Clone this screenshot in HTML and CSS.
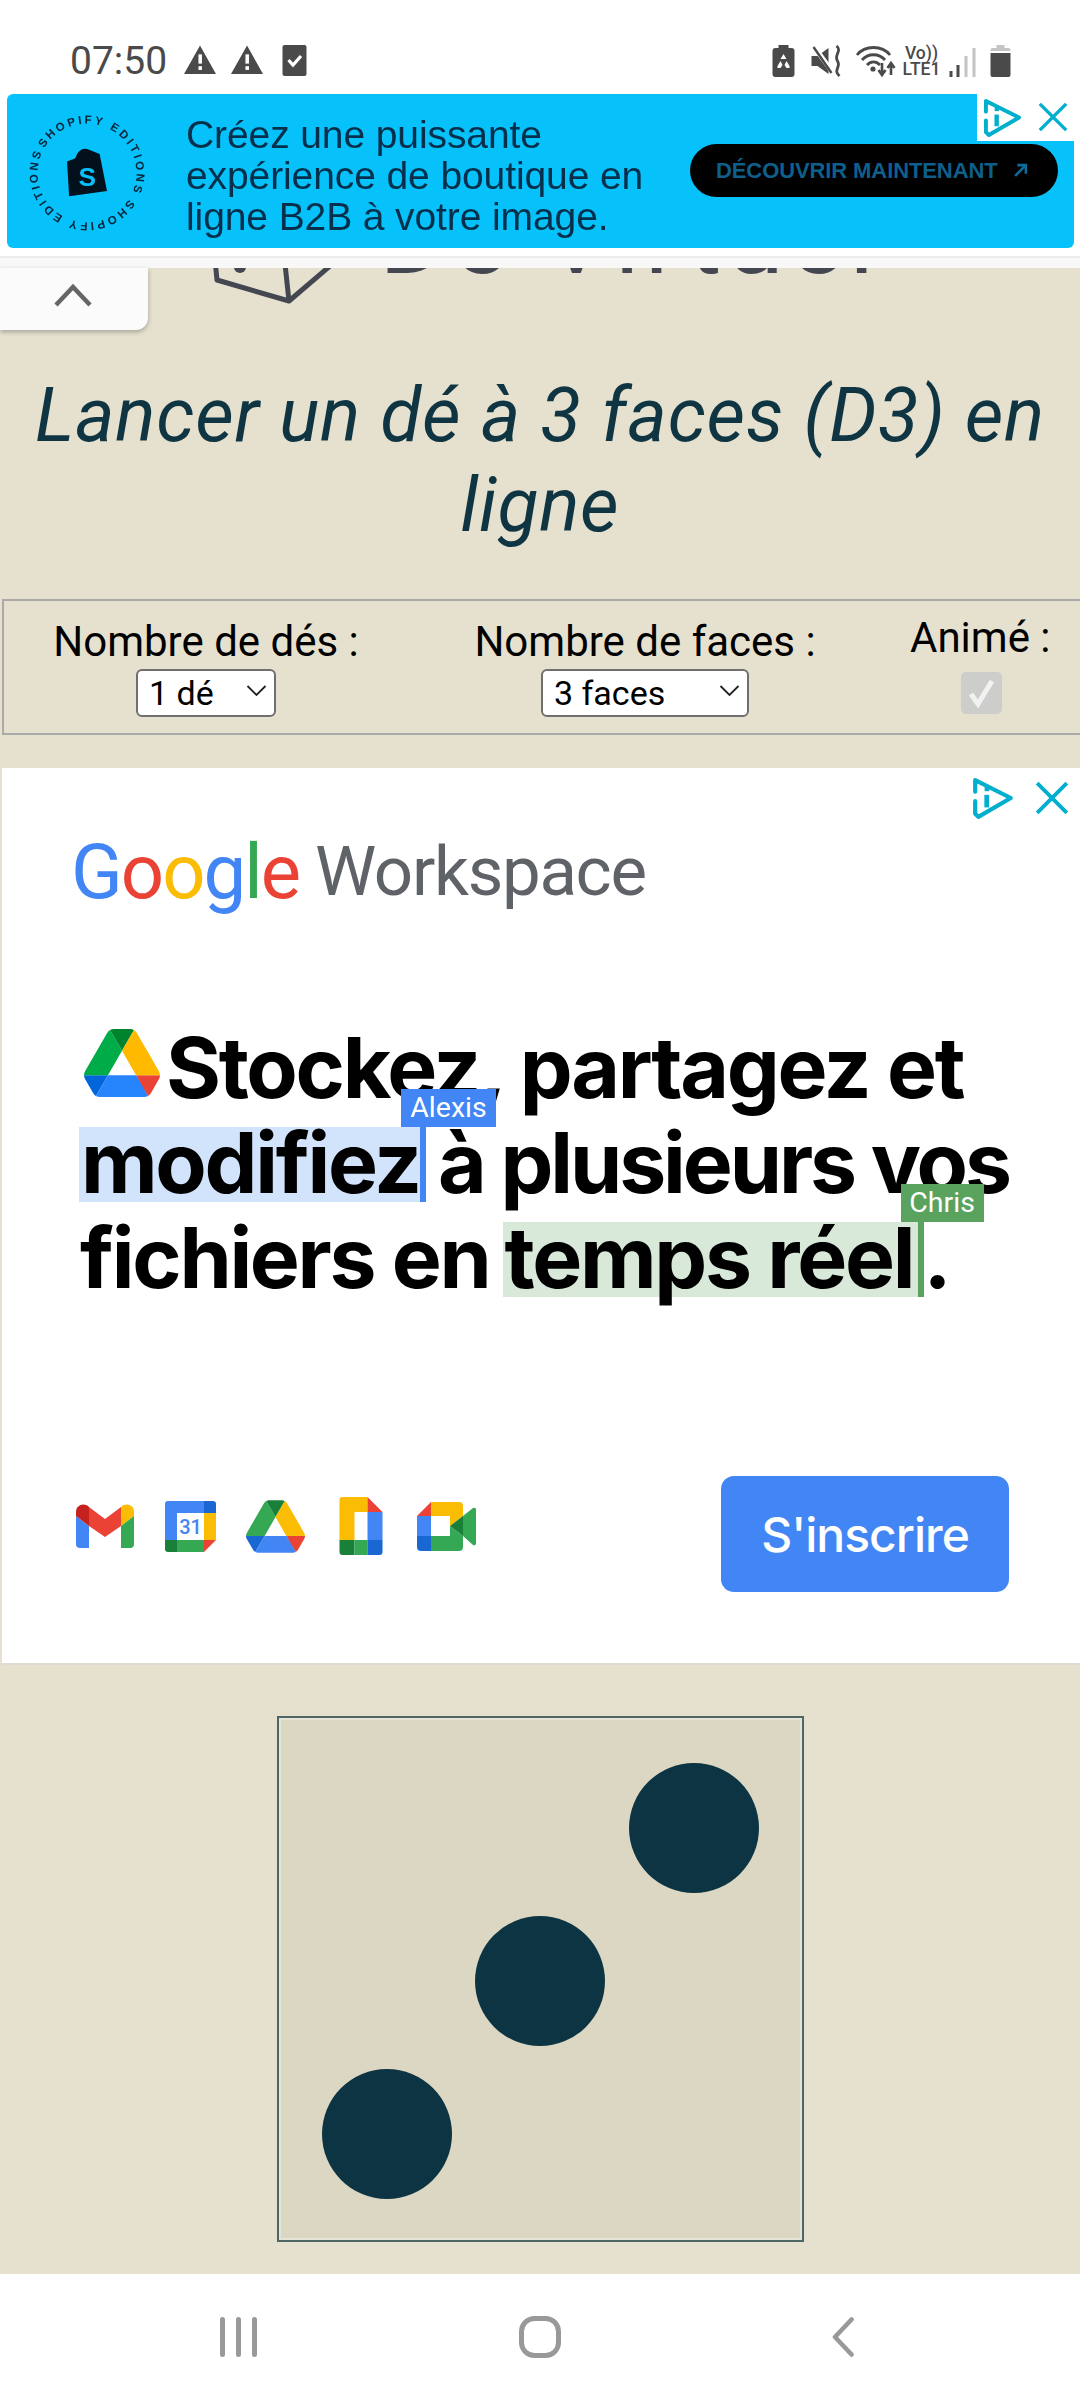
FILE: index.html
```html
<!DOCTYPE html>
<html lang="fr">
<head>
<meta charset="utf-8">
<title>Lancer un dé à 3 faces</title>
<link rel="stylesheet" href="styles.css">
</head>
<body>
<svg class="defs" width="0" height="0" aria-hidden="true">
  <symbol id="warn" viewBox="0 0 31 28"><path d="M15.5 0.5 L31 28 H0 Z" fill="#4a4a4a"/><rect x="14" y="9" width="3.4" height="9" fill="#fff"/><rect x="14" y="20.5" width="3.4" height="3.6" fill="#fff"/></symbol>
  <symbol id="adinfo" viewBox="0 0 40 42"><path d="M3 15 V4 L37 21 L6 39 L3 36 V24" fill="none" stroke="currentColor" stroke-width="4" stroke-linejoin="round" stroke-linecap="round"/><path d="M14 18 V30" stroke="currentColor" stroke-width="4.5"/><rect x="12" y="10" width="4.5" height="4.5" fill="currentColor"/></symbol>
  <symbol id="adclose" viewBox="0 0 34 34"><path d="M3 3 L31 31 M31 3 L3 31" stroke="currentColor" stroke-width="3.6" fill="none"/></symbol>
</svg>

<header class="status">
  <div class="status-left">
    <span class="clock">07:50</span>
    <svg class="ic-warn"><use href="#warn"/></svg>
    <svg class="ic-warn"><use href="#warn"/></svg>
    <svg class="ic-check" viewBox="0 0 24 31"><rect width="24" height="31" rx="2" fill="#4a4a4a"/><path d="M6 15 L10.5 20 L18.5 11" fill="none" stroke="#fff" stroke-width="3.2"/></svg>
  </div>
  <div class="status-right">
    <svg class="ic-saver" viewBox="0 0 22 32"><path d="M6 0 H16 V3 H19 a3 3 0 0 1 3 3 V29 a3 3 0 0 1 -3 3 H3 a3 3 0 0 1 -3 -3 V6 a3 3 0 0 1 3 -3 H6 Z" fill="#4a4a4a"/><path d="M11 9 L14 14 H8 Z M5 21 L8 16 L10 20 L8 23 H5 Z M17 21 L14 16 L12 20 L14 23 H17 Z" fill="#fff"/></svg>
    <svg class="ic-mute" viewBox="0 0 31 32"><path d="M0 11 H6 L17 3 V29 L6 21 H0 Z" fill="#4a4a4a"/><path d="M2 1 L21 27" stroke="#fff" stroke-width="5"/><path d="M2 2 L20 28" stroke="#4a4a4a" stroke-width="2.4"/><path d="M25 1 C31 6 22 10 26 16 C30 22 21 25 28 31" fill="none" stroke="#4a4a4a" stroke-width="2.8"/></svg>
    <svg class="ic-wifi" viewBox="0 0 40 32"><path d="M1 10 C9 0 26 0 34 10 M6 15 C12 8 23 8 29 15 M11 20 C15 16 20 16 24 20" fill="none" stroke="#4a4a4a" stroke-width="2.8"/><circle cx="17" cy="24" r="2.6" fill="#4a4a4a"/><path d="M26 18 V28 M22.5 25 L26 30 L29.5 25 M35 30 V20 M31.5 23 L35 18 L38.5 23" fill="none" stroke="#4a4a4a" stroke-width="2.6"/></svg>
    <div class="net"><span>Vo))</span><span>LTE1</span></div>
    <svg class="ic-signal" viewBox="0 0 26 30"><rect x="0" y="24" width="3" height="6" fill="#4a4a4a"/><rect x="7" y="18" width="3" height="12" fill="#4a4a4a"/><rect x="15" y="9" width="3" height="21" fill="#c4c4c4"/><rect x="23" y="1" width="3" height="29" fill="#c4c4c4"/></svg>
    <svg class="ic-battery" viewBox="0 0 20 32"><path d="M6 0 H14 V3 H18 a2 2 0 0 1 2 2 V6 H0 V5 a2 2 0 0 1 2 -2 H6 Z" fill="#c4c4c4"/><path d="M0 8 H20 V30 a2 2 0 0 1 -2 2 H2 a2 2 0 0 1 -2 -2 Z" fill="#4a4a4a"/></svg>
  </div>
</header>

<section class="top-ad">
  <div class="banner">
    <div class="banner-content">
      <svg class="seal" viewBox="0 0 116 116">
        <defs><path id="ring" d="M58 58 m-47 0 a47 47 0 1 1 94 0 a47 47 0 1 1 -94 0"/></defs>
        <text class="seal-text" transform="rotate(30 58 58)"><textPath href="#ring" textLength="290">SHOPIFY EDITIONS SHOPIFY EDITIONS</textPath></text>
        <path d="M39 47 L47 44 C49 36 55 33 60 36 L70 40 L77 75 L41 80 Z" fill="#02111c"/>
        <text class="seal-s" x="50" y="70">S</text>
      </svg>
      <p class="banner-copy">Créez une puissante<br>expérience de boutique en<br>ligne B2B à votre image.</p>
      <div class="banner-cta"><span>DÉCOUVRIR MAINTENANT</span><svg class="cta-arrow" viewBox="0 0 14 14"><path d="M2 12 L11 3 M4 2 H12 V10" fill="none" stroke="#0f6b9c" stroke-width="2.4"/></svg></div>
    </div>
  </div>
  <div class="ad-tools top-tools">
    <svg class="tool-info"><use href="#adinfo"/></svg>
    <svg class="tool-close"><use href="#adclose"/></svg>
  </div>
  <div class="banner-rule"></div>
</section>

<main class="page">
  <div class="site-logo">
    <svg class="logo-cube" viewBox="0 0 130 40"><path d="M5 -8 L7 12 L79 33 L120 -2 M75 -4 L79 33" fill="none" stroke="#44474f" stroke-width="5" stroke-linejoin="round"/><circle cx="30" cy="-1" r="6" fill="#44474f"/></svg>
    <span class="logo-text">Dé Virtuel</span>
  </div>
  <button class="collapse" type="button" aria-label="Replier"><svg viewBox="0 0 38 24"><path d="M2 22 L19 4 L36 22" fill="none" stroke="#666" stroke-width="4.5"/></svg></button>

  <h1 class="title">Lancer un dé à 3 faces (D3) en ligne</h1>

  <form class="controls">
    <div class="control control-dice">
      <label for="dice">Nombre de dés :</label>
      <div class="select-wrap wrap-dice">
        <select id="dice"><option>1 dé</option></select>
        <svg class="chevron" viewBox="0 0 20 12"><path d="M1 1 L10 10 L19 1" fill="none" stroke="#222" stroke-width="1.8"/></svg>
      </div>
    </div>
    <div class="control control-faces">
      <label for="faces">Nombre de faces :</label>
      <div class="select-wrap wrap-faces">
        <select id="faces"><option>3 faces</option></select>
        <svg class="chevron" viewBox="0 0 20 12"><path d="M1 1 L10 10 L19 1" fill="none" stroke="#222" stroke-width="1.8"/></svg>
      </div>
    </div>
    <div class="control control-anim">
      <label for="anim">Animé :</label>
      <div class="fake-check"><svg viewBox="0 0 41 42"><path d="M10 22 L17 32 L31 9" fill="none" stroke="#f2f2f2" stroke-width="5"/></svg></div>
    </div>
  </form>

  <section class="gw-ad">
    <div class="ad-tools gw-tools">
      <svg class="tool-info"><use href="#adinfo"/></svg>
      <svg class="tool-close"><use href="#adclose"/></svg>
    </div>
    <div class="gw-logo"><span class="c-b">G</span><span class="c-r">o</span><span class="c-y">o</span><span class="c-b">g</span><span class="c-g">l</span><span class="c-r">e</span><span class="gw-name">Workspace</span></div>
    <div class="headline">
      <div class="hl-line">
        <svg class="drive-big" viewBox="0 0 87.3 78">
          <path d="m6.6 66.85 3.85 6.65c.8 1.4 1.95 2.5 3.3 3.3l13.75-23.8h-27.5c0 1.55.4 3.1 1.2 4.5z" fill="#0066da"/>
          <path d="m43.65 25-13.75-23.8c-1.35.8-2.5 1.9-3.3 3.3l-25.4 44a9.06 9.06 0 0 0 -1.2 4.5h27.5z" fill="#00ac47"/>
          <path d="m73.55 76.8c1.35-.8 2.5-1.9 3.3-3.3l1.6-2.75 7.65-13.25c.8-1.4 1.2-2.95 1.2-4.5h-27.502l5.852 11.5z" fill="#ea4335"/>
          <path d="m43.65 25 13.75-23.8c-1.35-.8-2.9-1.2-4.5-1.2h-18.5c-1.6 0-3.15.45-4.5 1.2z" fill="#00832d"/>
          <path d="m59.8 53h-32.3l-13.75 23.8c1.35.8 2.9 1.2 4.5 1.2h50.8c1.6 0 3.15-.45 4.5-1.2z" fill="#2684fc"/>
          <path d="m73.4 26.5-12.7-22c-.8-1.4-1.95-2.5-3.3-3.3l-13.75 23.8 16.15 28h27.45c0-1.55-.4-3.1-1.2-4.5z" fill="#ffba00"/>
        </svg>
        <span>Stockez, partagez et</span>
      </div>
      <div class="hl-line hl-second">
        <span class="mark mark-blue">modifiez<span class="tag tag-blue">Alexis</span></span>
        <span class="after-blue">à plusieurs vos</span>
      </div>
      <div class="hl-line">
        <span>fichiers en</span>
        <span class="mark mark-green">temps réel<span class="tag tag-green">Chris</span></span><span class="after-green">.</span>
      </div>
    </div>
    <div class="gw-foot">
      <div class="apps">
        <svg class="app-gmail" viewBox="0 0 58 45">
          <path d="M0 12 L13 22 V44 H4 a4 4 0 0 1 -4 -4Z" fill="#4285f4"/>
          <path d="M0 12 V8 C0 1 8 -2 13 3 V22 Z" fill="#c5221f"/>
          <path d="M13 3 L29 15 L45 3 V22 L29 33 L13 22Z" fill="#ea4335"/>
          <path d="M45 3 C50 -2 58 1 58 8 V12 L45 22 Z" fill="#fbbc04"/>
          <path d="M45 22 L58 12 V40 a4 4 0 0 1 -4 4 H45Z" fill="#34a853"/>
        </svg>
        <svg class="app-cal" viewBox="0 0 51 51">
          <path d="M3 0 H39 V12 H12 V39 H0 V3 a3 3 0 0 1 3 -3Z" fill="#4285f4"/>
          <path d="M39 0 H48 a3 3 0 0 1 3 3 V12 H39Z" fill="#1967d2"/>
          <rect x="39" y="12" width="12" height="27" fill="#fbbc04"/>
          <path d="M39 39 H51 L39 51Z" fill="#ea4335"/>
          <rect x="12" y="39" width="27" height="12" fill="#34a853"/>
          <path d="M0 39 H12 V51 H3 a3 3 0 0 1 -3 -3Z" fill="#188038"/>
          <text class="cal-num" x="25.5" y="33">31</text>
        </svg>
        <svg class="app-drive" viewBox="0 0 87.3 78">
          <path d="m6.6 66.85 3.85 6.65c.8 1.4 1.95 2.5 3.3 3.3l13.75-23.8h-27.5c0 1.55.4 3.1 1.2 4.5z" fill="#1967d2"/>
          <path d="m43.65 25-13.75-23.8c-1.35.8-2.5 1.9-3.3 3.3l-25.4 44a9.06 9.06 0 0 0 -1.2 4.5h27.5z" fill="#34a853"/>
          <path d="m73.55 76.8c1.35-.8 2.5-1.9 3.3-3.3l1.6-2.75 7.65-13.25c.8-1.4 1.2-2.95 1.2-4.5h-27.502l5.852 11.5z" fill="#ea4335"/>
          <path d="m43.65 25 13.75-23.8c-1.35-.8-2.9-1.2-4.5-1.2h-18.5c-1.6 0-3.15.45-4.5 1.2z" fill="#188038"/>
          <path d="m59.8 53h-32.3l-13.75 23.8c1.35.8 2.9 1.2 4.5 1.2h50.8c1.6 0 3.15-.45 4.5-1.2z" fill="#4285f4"/>
          <path d="m73.4 26.5-12.7-22c-.8-1.4-1.95-2.5-3.3-3.3l-13.75 23.8 16.15 28h27.45c0-1.55-.4-3.1-1.2-4.5z" fill="#fbbc04"/>
        </svg>
        <svg class="app-docs" viewBox="0 0 43 58">
          <path d="M3 0 H28 V15 H15 V43 H0 V3 a3 3 0 0 1 3 -3Z" fill="#fbbc04"/>
          <path d="M28 0 L43 15 H28Z" fill="#ea4335"/>
          <rect x="28" y="15" width="15" height="28" fill="#4285f4"/>
          <path d="M0 43 H15 V58 H3 a3 3 0 0 1 -3 -3Z" fill="#188038"/>
          <rect x="15" y="43" width="13" height="15" fill="#34a853"/>
          <path d="M28 43 H43 V55 a3 3 0 0 1 -3 3 H28Z" fill="#1967d2"/>
        </svg>
        <svg class="app-meet" viewBox="0 0 59 49">
          <path d="M0 14 L14 0 V14Z" fill="#ea4335"/>
          <path d="M14 0 H42 a4 4 0 0 1 4 4 V14 L33 24 V14 H14Z" fill="#fbbc04"/>
          <rect x="0" y="14" width="14" height="20" fill="#4285f4"/>
          <path d="M0 34 H14 V49 H4 a4 4 0 0 1 -4 -4Z" fill="#1967d2"/>
          <path d="M14 34 H33 V24 L46 34 V45 a4 4 0 0 1 -4 4 H14Z" fill="#34a853"/>
          <path d="M33 24 L46 14 V34Z" fill="#188038"/>
          <path d="M46 14 L56 6 a2 2 0 0 1 3 2 V41 a2 2 0 0 1 -3 2 L46 34Z" fill="#34a853"/>
        </svg>
      </div>
      <a class="signup" href="#">S'inscrire</a>
    </div>
  </section>

  <div class="dice">
    <span class="pip pip-a"></span>
    <span class="pip pip-b"></span>
    <span class="pip pip-c"></span>
  </div>
</main>

<nav class="navbar">
  <svg class="nav-recent" viewBox="0 0 37 40"><path d="M2.5 2.5 V37.5 M18.5 2.5 V37.5 M34.5 2.5 V37.5" stroke="#999" stroke-width="5" stroke-linecap="round"/></svg>
  <svg class="nav-home" viewBox="0 0 42 42"><rect x="2.5" y="2.5" width="37" height="37" rx="13" fill="none" stroke="#999" stroke-width="5"/></svg>
  <svg class="nav-back" viewBox="0 0 22 40"><path d="M19.5 2.5 L3 20 L19.5 37.5" fill="none" stroke="#999" stroke-width="4.6" stroke-linecap="round" stroke-linejoin="round"/></svg>
</nav>
</body>
</html>
```

FILE: styles.css
```css
* { box-sizing: border-box; }
html, body { margin: 0; padding: 0; }
body {
  width: 1080px;
  height: 2400px;
  overflow: hidden;
  display: flex;
  flex-direction: column;
  background: #fff;
  font-family: Roboto, "Liberation Sans", sans-serif;
}
.defs { position: absolute; }

/* status bar */
.status {
  height: 93px;
  flex: none;
  display: flex;
  justify-content: space-between;
  padding: 45px 69px 0 70px;
}
.status-left, .status-right { display: flex; align-items: flex-start; }
.clock { font-size: 39px; line-height: 32px; color: #4a4a4a; margin-right: 17px; }
.ic-warn { width: 32px; height: 29px; margin: 0 15px 0 0; }
.ic-check { width: 25px; height: 31px; margin-left: 4px; }
.ic-saver { width: 23px; height: 32px; margin-right: 16px; }
.ic-mute { width: 32px; height: 32px; margin-right: 12px; }
.ic-wifi { width: 42px; height: 32px; margin-right: 5px; }
.net { display: flex; flex-direction: column; align-items: center; width: 39px; margin-right: 8px; font-size: 17.5px; line-height: 16px; font-weight: 500; color: #4a4a4a; }
.ic-signal { width: 27px; height: 30px; margin: 2px 14px 0 0; }
.ic-battery { width: 21px; height: 32px; }

/* top ad */
.top-ad { height: 175px; flex: none; position: relative; background: #fff; }
.banner {
  margin: 1px 6px 0 7px;
  height: 154px;
  background: #06c1fa;
  border-radius: 6px;
  overflow: hidden;
}
.banner-content { display: flex; align-items: flex-start; height: 100%; filter: blur(0.7px); position: relative; }
.seal { width: 122px; height: 122px; margin: 18px 0 0 19px; flex: none; }
.seal-text { font: 700 11px "Liberation Sans", sans-serif; fill: #06243a; }
.seal-s { font: 700 25px "Liberation Sans", sans-serif; fill: #06c1fa; }
.banner-copy {
  margin: 20px 0 0 38px;
  width: 500px;
  font: 400 39px/41px "Liberation Sans", sans-serif;
  color: #052f4a;
  letter-spacing: -0.1px;
  flex: none;
  white-space: nowrap;
}
.banner-cta {
  position: absolute;
  left: 683px; top: 50px;
  width: 368px; height: 53px;
  border-radius: 27px;
  background: #000;
  display: flex;
  align-items: center;
  padding-left: 26px;
  font: 700 22px "Liberation Sans", sans-serif;
  color: #0f5f8c;
  white-space: nowrap;
}
.banner-cta span { width: 297px; letter-spacing: -0.1px; }
.cta-arrow { width: 15px; height: 15px; }
.ad-tools { position: absolute; display: flex; align-items: center; color: #00aecd; background: #fff; }
.top-tools { right: 0; top: 0; width: 103px; height: 48px; padding-left: 6px; }
.top-tools .tool-info { width: 39px; height: 41px; margin-right: 15px; }
.top-tools .tool-close { width: 32px; height: 32px; }
.banner-rule { position: absolute; left: 0; right: 0; top: 163px; height: 12px; background: #f8f8f8; border-top: 2px solid #ececec; }

/* page */
.page {
  flex: 1;
  position: relative;
  background: #e6e1cf;
  display: flex;
  flex-direction: column;
}
.site-logo { height: 37px; overflow: hidden; position: relative; padding-left: 210px; display: flex; }
.logo-cube { width: 130px; height: 40px; overflow: visible; flex: none; }
.logo-text {
  margin: -82px 0 0 39px;
  font: 400 104px/104px Roboto, sans-serif;
  color: #44474f;
  white-space: nowrap;
  letter-spacing: 5px;
}
.collapse {
  position: absolute;
  left: 0; top: 0;
  width: 148px; height: 62px;
  padding: 15px 0 0 54px;
  background: #fbfbfb;
  border: 0;
  border-bottom-right-radius: 12px;
  box-shadow: 0 2px 5px rgba(0,0,0,.28);
  display: flex;
  align-items: flex-start;
}
.collapse svg { width: 38px; height: 24px; display: block; }
.title {
  margin: 65px 0 49px;
  padding: 0 20px;
  text-align: center;
  font: italic 400 75px/90px Roboto, sans-serif;
  color: #0f3442;
  letter-spacing: 0.8px;
}
.controls {
  height: 136px;
  margin-left: 2px;
  border: 2px solid #aaa;
  border-right: 0;
  display: flex;
  font-size: 42px;
  color: #000;
}
.control { display: flex; flex-direction: column; align-items: center; position: relative; }
.control-dice { width: 404px; padding-top: 18px; }
.control-faces { width: 474px; padding-top: 18px; }
.control-anim { flex: 1; padding-top: 14px; margin-left: 28px; align-items: flex-start; }
.control label { line-height: 46px; white-space: nowrap; }
.select-wrap { position: relative; margin-top: 1px; }
.wrap-dice { width: 140px; }
.wrap-faces { width: 208px; }
.select-wrap select {
  appearance: none;
  width: 100%;
  height: 48px;
  padding: 0 0 0 11px;
  background: #fff;
  border: 2px solid #6f6f6f;
  border-radius: 6px;
  font: 400 34px Roboto, sans-serif;
  color: #000;
}
.chevron { position: absolute; right: 9px; top: 19px; width: 21px; height: 12px; }
.fake-check { width: 41px; height: 42px; margin: 11px 0 0 51px; border-radius: 5px; background: #cdcdcb; }
.fake-check svg { display: block; }

/* workspace ad */
.gw-ad {
  margin: 33px 0 0 2px;
  height: 897px;
  position: relative;
  background: #fff;
  border-bottom: 2px solid #dedbd2;
  padding-top: 59px;
}
.gw-tools { right: 10px; top: 8px; width: 98px; height: 44px; background: transparent; }
.gw-tools .tool-info { width: 42px; height: 44px; margin-right: 20px; }
.gw-tools .tool-close { width: 36px; height: 36px; }
.gw-logo {
  display: flex;
  height: 90px;
  padding-left: 69px;
  font: 400 76px/90px Roboto, sans-serif;
  letter-spacing: -2px;
}
.c-b { color: #4285f4; } .c-r { color: #ea4335; } .c-y { color: #fbbc05; } .c-g { color: #34a853; }
.gw-name { color: #5f6368; margin-left: 16px; font-size: 69px; letter-spacing: -1.3px; }
.headline { margin-top: 115px; padding-left: 78px; color: #000; font: 700 84px/71px Inter, sans-serif; letter-spacing: -2.3px; white-space: nowrap; }
.hl-line { height: 75px; margin-bottom: 20px; display: flex; position: relative; }
.hl-line:last-child { margin-bottom: 0; }
.drive-big { width: 76px; height: 68px; margin: -3px 6px 0 4px; flex: none; }
.mark { position: relative; height: 75px; padding-left: 2px; }
.mark-blue { background: #d2e3fc; width: 341px; margin-left: -1px; }
.mark-green { background: #d9e9d9; width: 415px; margin-left: 13px; padding-left: 2px; }
.mark::after { content: ""; position: absolute; right: -6px; top: 0; bottom: 0; width: 6px; }
.mark-blue::after { background: #4285f4; }
.mark-green::after { background: #5aa35f; }
.after-blue { margin-left: 18px; letter-spacing: -3.1px; }
.after-green { margin-left: 6px; }
.tag { position: absolute; top: -38px; height: 38px; font: 400 28.5px/38px Roboto, sans-serif; letter-spacing: 0; color: #fff; text-align: center; }
.tag-blue { left: 322px; width: 95px; background: #4285f4; }
.tag-green { left: 398px; width: 83px; background: #5aa35f; }
.gw-foot { display: flex; align-items: center; justify-content: space-between; margin-top: 179px; padding: 0 71px 0 74px; }
.apps { display: flex; align-items: center; margin-bottom: 16px; gap: 30px; }
.app-gmail { width: 58px; height: 45px; }
.app-cal { width: 51px; height: 51px; margin-left: 1px; }
.app-drive { width: 59px; height: 53px; }
.app-docs { width: 44px; height: 58px; margin-left: 4px; }
.app-meet { width: 59px; height: 49px; margin-left: 4px; }
.cal-num { font: 500 20px Roboto, sans-serif; fill: #4285f4; text-anchor: middle; }
.signup {
  width: 288px; height: 116px;
  display: flex; align-items: center; justify-content: center;
  border-radius: 13px;
  background: #4285f4;
  color: #fff;
  font: 500 48px Inter, sans-serif;
  letter-spacing: -1px;
  text-decoration: none;
}

/* dice */
.dice {
  width: 527px; height: 526px;
  margin: 51px 0 0 277px;
  border: 2px solid #4e6664;
  box-shadow: inset 0 0 0 2px #e6e4d6;
  background: #dbd7c3;
  padding: 33px 31px 29px;
  display: grid;
  grid-template-columns: repeat(3, 1fr);
  grid-template-rows: repeat(3, 1fr);
  place-items: center;
}
.pip { width: 130px; height: 130px; border-radius: 50%; background: #0d3442; }
.pip-a { grid-column: 3; grid-row: 1; }
.pip-b { grid-column: 2; grid-row: 2; }
.pip-c { grid-column: 1; grid-row: 3; }

/* nav */
.navbar { height: 126px; flex: none; background: #fff; display: flex; align-items: flex-start; padding: 42px 0 0 220px; }
.nav-recent { width: 37px; height: 40px; margin-top: 1px; }
.nav-home { width: 42px; height: 42px; margin-left: 262px; }
.nav-back { width: 22px; height: 40px; margin: 1px 0 0 271px; }
```
